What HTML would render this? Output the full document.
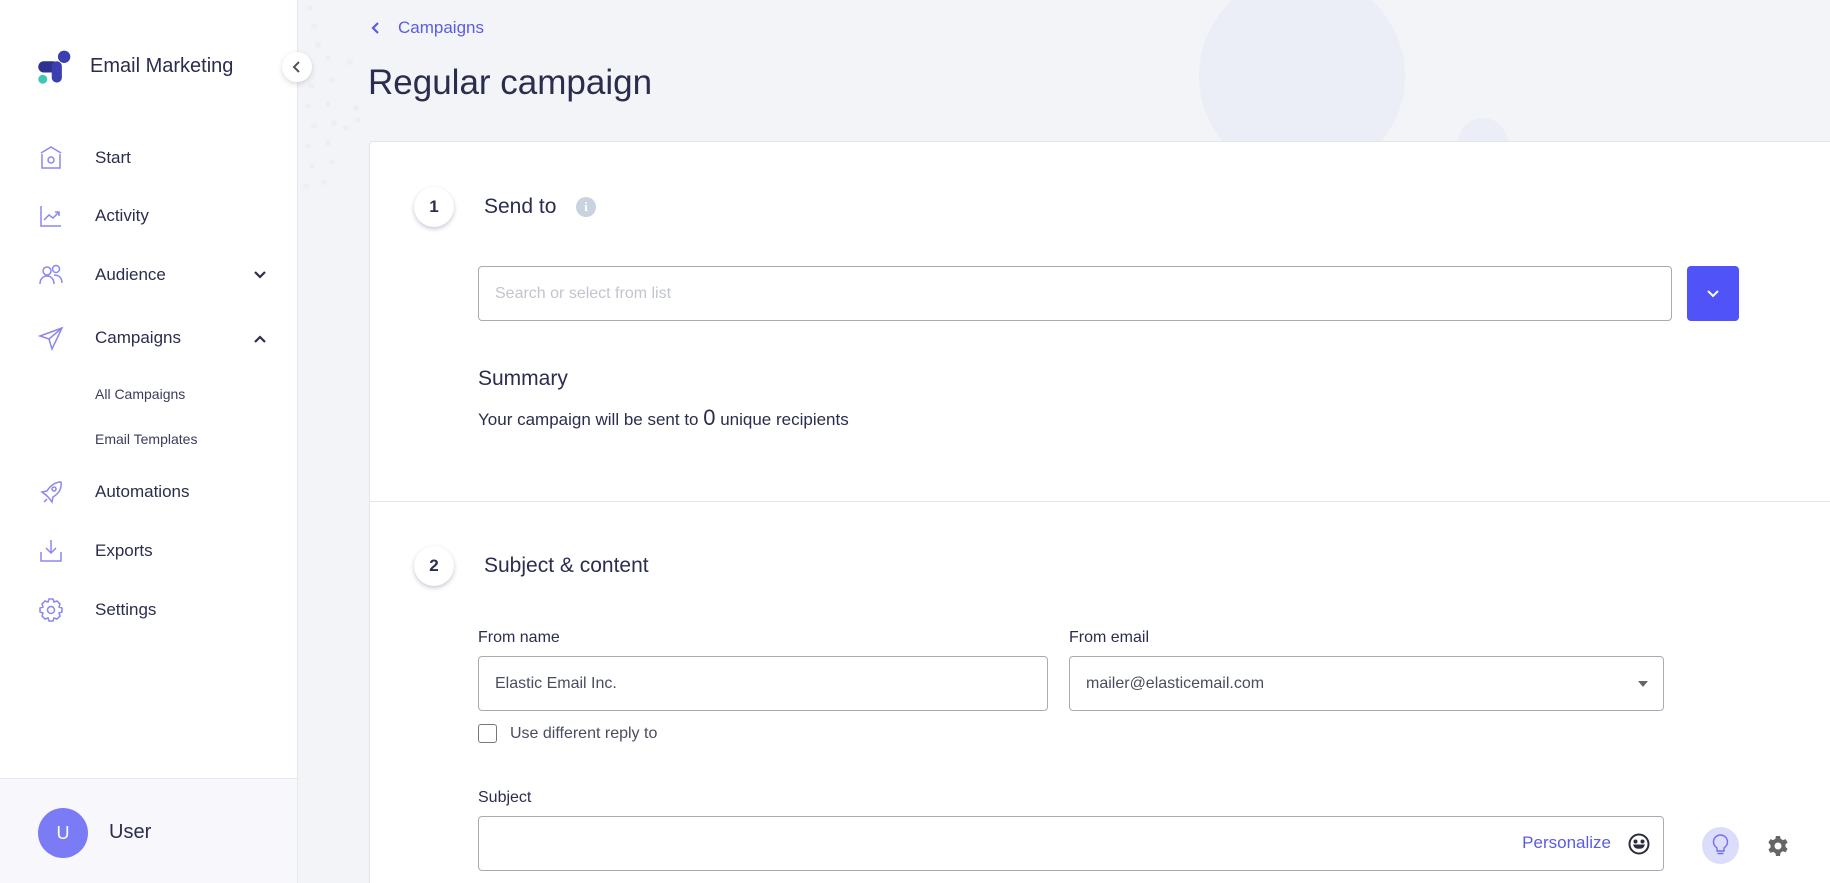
<!DOCTYPE html>
<html style="overflow:hidden;width:1830px;height:883px"><head><meta charset="utf-8"><style>
*{box-sizing:border-box;margin:0;padding:0}
body{width:1830px;height:883px;overflow:hidden;background:#f3f4f8;font-family:"Liberation Sans",sans-serif;color:#2b2d4e;position:relative}
.abs{position:absolute}
.side{left:0;top:0;width:298px;height:883px;background:#fff;border-right:1px solid #e6e7ee}
.nav{position:absolute;left:95px;font-size:17px;color:#2b2d4e;transform:translateY(-50%)}
.ic{position:absolute;left:38px;width:26px;height:26px;transform:translateY(-50%)}
.sub{position:absolute;left:95px;font-size:14px;color:#3a3c5c;transform:translateY(-50%)}
.card{left:369px;top:141px;width:1461px;height:742px;background:#fff;border:1px solid #e4e5ec;border-right:none;border-bottom:none;border-radius:4px 0 0 0}
.step{position:absolute;width:40px;height:40px;border-radius:50%;background:#fff;box-shadow:0 2px 4px rgba(40,40,90,.25);font-weight:bold;font-size:17px;text-align:center;line-height:40px;color:#2b2d4e}
.h{position:absolute;font-size:21px;transform:translateY(-50%)}
.inp{position:absolute;border:1px solid #a7abb6;border-radius:4px;background:#fff}
.lbl{position:absolute;font-size:16px;color:#2b2d4e;transform:translateY(-50%)}
.val{position:absolute;left:16px;top:50%;transform:translateY(-50%);font-size:16px;color:#4a4d60}
</style></head><body>
<div class="abs" style="left:1199px;top:-27px;width:206px;height:206px;border-radius:50%;background:#eceef7"></div>
<div class="abs" style="left:1458px;top:118px;width:50px;height:50px;border-radius:50%;background:#eceef7"></div>
<svg class="abs" style="left:298px;top:0" width="90" height="220">
<g fill="#eceef5">
<circle cx="12" cy="8" r="3"/><circle cx="16" cy="26" r="3"/><circle cx="20" cy="45" r="3"/><circle cx="8" cy="62" r="3"/><circle cx="30" cy="58" r="3"/><circle cx="13" cy="86" r="3"/><circle cx="34" cy="80" r="3"/><circle cx="10" cy="106" r="3"/><circle cx="30" cy="104" r="3"/><circle cx="52" cy="62" r="3"/><circle cx="16" cy="126" r="3"/><circle cx="36" cy="123" r="3"/><circle cx="58" cy="108" r="3"/><circle cx="10" cy="146" r="3"/><circle cx="30" cy="143" r="3"/><circle cx="48" cy="128" r="3"/><circle cx="14" cy="166" r="3"/><circle cx="34" cy="162" r="3"/><circle cx="8" cy="186" r="3"/><circle cx="26" cy="182" r="3"/><circle cx="60" cy="120" r="3"/></g></svg>

<div class="abs side"></div>
<svg class="abs" style="left:36px;top:50px" width="36" height="36" viewBox="0 0 32 32">
<circle cx="25" cy="6" r="5.5" fill="#3b3fb0"/><rect x="2" y="10" width="18" height="10" rx="5" fill="#2f318f"/><rect x="14" y="10" width="9" height="19" rx="4.5" fill="#3b3fb0"/><circle cx="6" cy="26" r="4" fill="#3ec7b5"/></svg>
<div class="abs" style="left:90px;top:55px;font-size:20px;color:#2b2d4e">Email Marketing</div>
<div class="abs" style="left:282px;top:52px;width:30px;height:30px;border-radius:50%;background:#fff;box-shadow:0 2px 6px rgba(0,0,0,.15)"><svg width="30" height="30"><path d="M17 10l-5 5 5 5" stroke="#555" stroke-width="2" fill="none"/></svg></div>

<svg class="ic" style="top:158px" viewBox="0 0 26 26" fill="none" stroke="#8b87f0" stroke-width="1.5"><path d="M3 8L13 2l10 6"/><path d="M4 9v14h18V9"/><circle cx="13" cy="15" r="3"/></svg>
<div class="nav" style="top:158px">Start</div>
<svg class="ic" style="top:216px" viewBox="0 0 26 26" fill="none" stroke="#8b87f0" stroke-width="1.5"><path d="M3 3v20h20"/><path d="M6 17l5-5 4 3 6-6"/><path d="M17 9h4v4"/></svg>
<div class="nav" style="top:216px">Activity</div>
<svg class="ic" style="top:275px" viewBox="0 0 26 26" fill="none" stroke="#8b87f0" stroke-width="1.5"><circle cx="9" cy="9" r="4"/><path d="M2 22c0-5 3-8 7-8s7 3 7 8"/><circle cx="18" cy="7" r="3.5"/><path d="M16 13c4 0 8 2 8 8"/></svg>
<div class="nav" style="top:275px">Audience</div>
<svg class="abs" style="left:252px;top:268px" width="16" height="14"><path d="M3 4l5 5 5-5" stroke="#2b2d4e" stroke-width="2.2" fill="none"/></svg>
<svg class="ic" style="top:338px" viewBox="0 0 26 26" fill="none" stroke="#8b87f0" stroke-width="1.5"><path d="M24 3L2 11l9 3 3 10z"/><path d="M11 14L24 3"/></svg>
<div class="nav" style="top:338px">Campaigns</div>
<svg class="abs" style="left:252px;top:332px" width="16" height="14"><path d="M3 10l5-5 5 5" stroke="#2b2d4e" stroke-width="2.2" fill="none"/></svg>
<div class="sub" style="top:394px">All Campaigns</div>
<div class="sub" style="top:439px">Email Templates</div>
<svg class="ic" style="top:493px" viewBox="0 0 26 26" fill="none" stroke="#8b87f0" stroke-width="1.5"><path d="M23 2c-6 0-11 4-14 9l-5 1 4 3 3 3 3 4 1-5c5-3 9-8 8-15z"/><circle cx="16" cy="9" r="2"/><path d="M9 19l-3 3"/></svg>
<div class="nav" style="top:492px">Automations</div>
<svg class="ic" style="top:551px" viewBox="0 0 26 26" fill="none" stroke="#8b87f0" stroke-width="1.5"><path d="M3 14v9h20v-9"/><path d="M13 2v13M8 10l5 5 5-5"/></svg>
<div class="nav" style="top:551px">Exports</div>
<svg class="ic" style="top:610px" viewBox="0 0 26 26" fill="none" stroke="#8b87f0" stroke-width="1.5"><circle cx="13" cy="13" r="3.5"/><path d="M11 2h4l1 3 3-1 3 3-1 3 3 1v4l-3 1 1 3-3 3-3-1-1 3h-4l-1-3-3 1-3-3 1-3-3-1v-4l3-1-1-3 3-3 3 1z"/></svg>
<div class="nav" style="top:610px">Settings</div>

<div class="abs" style="left:0;top:778px;width:298px;height:105px;background:#f8f8fc;border-top:1px solid #e6e7ee;border-right:1px solid #e6e7ee"></div>
<div class="abs" style="left:38px;top:808px;width:50px;height:50px;border-radius:50%;background:#7b7cf5;color:#fff;text-align:center;line-height:50px;font-size:18px">U</div>
<div class="abs" style="left:109px;top:821px;font-size:20px;color:#2b2d4e">User</div>

<svg class="abs" style="left:368px;top:20px" width="16" height="16"><path d="M10 3l-5 5 5 5" stroke="#5b5be6" stroke-width="2.2" fill="none"/></svg>
<div class="abs" style="left:398px;top:18px;font-size:17px;color:#5b5be6">Campaigns</div>
<div class="abs" style="left:368px;top:63px;font-size:35px;color:#2b2d4e">Regular campaign</div>

<div class="abs card"></div>
<div class="abs" style="left:370px;top:501px;width:1460px;height:1px;background:#e4e5ec"></div>

<div class="step" style="left:414px;top:187px">1</div>
<div class="h" style="left:484px;top:207px">Send to</div>
<div class="abs" style="left:576px;top:197px;width:20px;height:20px;border-radius:50%;background:#c9d2df;color:#fff;font-size:13px;font-weight:bold;text-align:center;line-height:20px;font-family:'Liberation Serif',serif">i</div>
<div class="inp" style="left:478px;top:266px;width:1194px;height:55px"><span class="val" style="color:#c2c5ce">Search or select from list</span></div>
<div class="abs" style="left:1687px;top:266px;width:52px;height:55px;border-radius:4px;background:#5053f8"><svg width="52" height="55"><path d="M21 25l5 5 5-5" stroke="#fff" stroke-width="2" fill="none"/></svg></div>
<div class="h" style="left:478px;top:379px">Summary</div>
<div class="abs" style="left:478px;top:405px;font-size:17px">Your campaign will be sent to <span style="font-size:22px">0</span> unique recipients</div>

<div class="step" style="left:414px;top:546px">2</div>
<div class="h" style="left:484px;top:566px">Subject &amp; content</div>
<div class="lbl" style="left:478px;top:638px">From name</div>
<div class="lbl" style="left:1069px;top:638px">From email</div>
<div class="inp" style="left:478px;top:656px;width:570px;height:55px"><span class="val">Elastic Email Inc.</span></div>
<div class="inp" style="left:1069px;top:656px;width:595px;height:55px"><span class="val">mailer@elasticemail.com</span><svg class="abs" style="right:14px;top:22px" width="12" height="10"><path d="M1 2h10L6 8z" fill="#666"/></svg></div>
<div class="abs" style="left:478px;top:724px;width:19px;height:19px;border:1.5px solid #777;border-radius:3px"></div>
<div class="lbl" style="left:510px;top:734px;color:#4a4d60">Use different reply to</div>
<div class="lbl" style="left:478px;top:798px">Subject</div>
<div class="inp" style="left:478px;top:816px;width:1186px;height:55px"><span class="abs" style="right:52px;top:16px;font-size:17px;color:#5b5be6">Personalize</span>
<svg class="abs" style="right:12px;top:15px" width="24" height="24" viewBox="0 0 24 24" fill="none" stroke="#2b2d3e" stroke-width="2"><circle cx="12" cy="12" r="9.5"/><circle cx="8.5" cy="9.5" r="1" fill="#2b2d3e"/><circle cx="15.5" cy="9.5" r="1" fill="#2b2d3e"/><path d="M7.5 13.5h9c-1 3-8 3-9 0z" fill="#2b2d3e"/></svg></div>
<div class="abs" style="left:1702px;top:827px;width:37px;height:37px;border-radius:50%;background:#dcdcfb"><svg width="37" height="37" fill="none" stroke="#6e6ef0" stroke-width="1.4"><path d="M15 24v-3c-2-1.5-3.5-3.5-3.5-6a7 7 0 0 1 14 0c0 2.5-1.5 4.5-3.5 6v3zM15.5 26.5h6"/></svg></div>
<svg class="abs" style="left:1766px;top:834px" width="24" height="24" viewBox="0 0 24 24"><path fill="#666" d="M10 2h4l.6 2.8 2.3 1.3 2.7-1 2 3.4-2.1 1.9v2.6l2.1 1.9-2 3.4-2.7-1-2.3 1.3L14 22h-4l-.6-2.8-2.3-1.3-2.7 1-2-3.4 2.1-1.9v-2.6L2.4 8.5l2-3.4 2.7 1 2.3-1.3zM12 8.5a3.5 3.5 0 1 0 0 7 3.5 3.5 0 0 0 0-7z"/></svg>
</body></html>
